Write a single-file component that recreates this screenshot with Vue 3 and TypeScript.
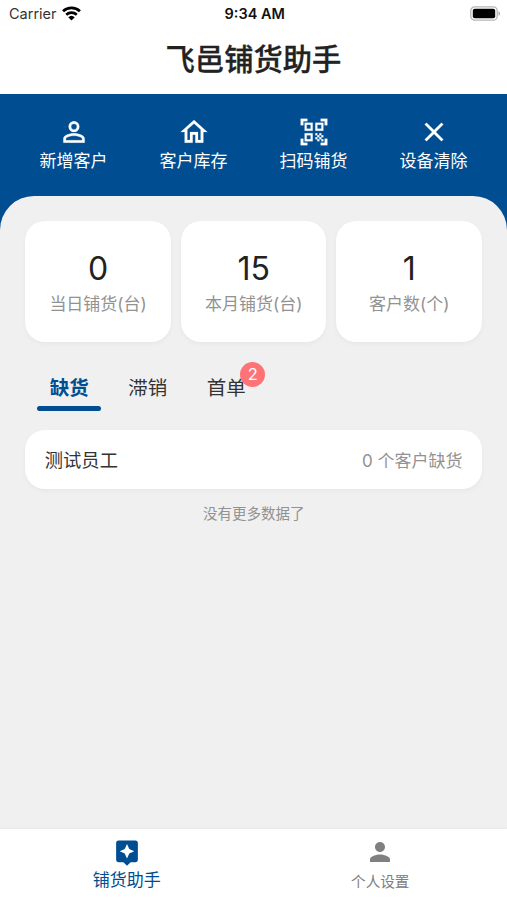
<script setup lang="ts">
import { ref } from 'vue'

interface Action {
  label: string
  path: string
}
interface Stat {
  value: number
  label: string
}
interface Tab {
  label: string
  badge?: number
}
interface NavItem {
  label: string
  path: string
}

const actions: Action[] = [
  {
    label: '新增客户',
    path: 'M12 5.9a2.1 2.1 0 1 1 0 4.2 2.1 2.1 0 0 1 0-4.2m0 9c2.97 0 6.1 1.46 6.1 2.1v1.1H5.9V17c0-.64 3.13-2.1 6.1-2.1M12 4C9.79 4 8 5.79 8 8s1.79 4 4 4 4-1.79 4-4-1.79-4-4-4zm0 9c-2.67 0-8 1.34-8 4v3h16v-3c0-2.66-5.33-4-8-4z',
  },
  {
    label: '客户库存',
    path: 'M12 5.69l5 4.5V18h-2v-6H9v6H7v-7.81l5-4.5M12 3L2 12h3v8h6v-6h2v6h6v-8h3L12 3z',
  },
  {
    label: '扫码铺货',
    path: 'M9.5 6.5v3h-3v-3h3M11 5H5v6h6V5zm-1.5 9.5v3h-3v-3h3M11 13H5v6h6v-6zm6.5-6.5v3h-3v-3h3M19 5h-6v6h6V5zm-6 8h1.5v1.5H13V13zm1.5 1.5H16V16h-1.5v-1.5zM16 13h1.5v1.5H16V13zm-3 3h1.5v1.5H13V16zm1.5 1.5H16V19h-1.5v-1.5zM16 16h1.5v1.5H16V16zm1.5-1.5H19V16h-1.5v-1.5zm0 3H19V19h-1.5v-1.5zM22 7h-2V4h-3V2h5v5zm0 15v-5h-2v3h-3v2h5zM2 22h5v-2H4v-3H2v5zM2 2v5h2V4h3V2H2z',
  },
  {
    label: '设备清除',
    path: 'M19 6.41L17.59 5 12 10.59 6.41 5 5 6.41 10.59 12 5 17.59 6.41 19 12 13.41 17.59 19 19 17.59 13.41 12 19 6.41z',
  },
]

const stats: Stat[] = [
  { value: 0, label: '当日铺货(台)' },
  { value: 15, label: '本月铺货(台)' },
  { value: 1, label: '客户数(个)' },
]

const tabs: Tab[] = [{ label: '缺货' }, { label: '滞销' }, { label: '首单', badge: 2 }]

const navItems: NavItem[] = [
  {
    label: '铺货助手',
    path: 'M19 2H5c-1.11 0-2 .9-2 2v14c0 1.1.89 2 2 2h4l3 3 3-3h4c1.1 0 2-.9 2-2V4c0-1.1-.9-2-2-2zm-5.12 10.88L12 17l-1.88-4.12L6 11l4.12-1.88L12 5l1.88 4.12L18 11l-4.12 1.88z',
  },
  {
    label: '个人设置',
    path: 'M12 12c2.21 0 4-1.79 4-4s-1.79-4-4-4-4 1.79-4 4 1.79 4 4 4zm0 2c-2.67 0-8 1.34-8 4v2h16v-2c0-2.66-5.33-4-8-4z',
  },
]

const activeTab = ref(0)
const activeNav = ref(0)
</script>

<template>
  <div class="screen">
    <header class="status">
      <div class="carrier">
        <span>Carrier</span>
        <svg class="wifi" viewBox="0 0 18 14">
          <path class="arc" d="M1 4.9a11.6 11.6 0 0 1 16 0" />
          <path class="arc" d="M4 8.1a7.4 7.4 0 0 1 10 0" />
          <path d="M9 13.6L5.9 10.6a4.5 4.5 0 0 1 6.2 0z" />
        </svg>
      </div>
      <span class="clock">9:34 AM</span>
      <svg class="battery" viewBox="0 0 31 15">
        <rect class="shell" x=".8" y=".8" width="26.4" height="13.4" rx="4" />
        <rect x="2.8" y="2.8" width="22.4" height="9.4" rx="2" />
        <path class="cap" d="M28.5 5.2c2 .7 2 3.9 0 4.6z" />
      </svg>
    </header>
    <h1 class="title">飞邑铺货助手</h1>

    <nav class="actions">
      <button v-for="action in actions" :key="action.label" class="action">
        <svg viewBox="0 0 24 24"><path :d="action.path" /></svg>
        <span>{{ action.label }}</span>
      </button>
    </nav>

    <main class="sheet">
      <section class="stats">
        <article v-for="stat in stats" :key="stat.label" class="stat">
          <strong>{{ stat.value }}</strong>
          <span>{{ stat.label }}</span>
        </article>
      </section>

      <div class="tabs">
        <button
          v-for="(tab, i) in tabs"
          :key="tab.label"
          class="tab"
          :class="{ active: i === activeTab }"
          @click="activeTab = i"
        >
          {{ tab.label }}
          <span v-if="tab.badge" class="badge">{{ tab.badge }}</span>
        </button>
      </div>

      <div class="row">
        <span class="name">测试员工</span>
        <span class="count">0 个客户缺货</span>
      </div>
      <p class="end">没有更多数据了</p>
    </main>

    <footer class="bottom">
      <button
        v-for="(item, i) in navItems"
        :key="item.label"
        class="nav"
        :class="{ active: i === activeNav }"
        @click="activeNav = i"
      >
        <svg viewBox="0 0 24 24"><path :d="item.path" /></svg>
        <span>{{ item.label }}</span>
      </button>
    </footer>
  </div>
</template>

<style>
body {
  margin: 0;
}
</style>

<style scoped>
.screen {
  display: flex;
  flex-direction: column;
  height: 900px;
  overflow: hidden;
  background: #fff;
  color: #222;
  font-family: Inter, 'Noto Sans CJK SC', sans-serif;
}
button {
  padding: 0;
  border: 0;
  background: none;
  color: inherit;
  font: inherit;
}
.status {
  display: grid;
  grid-template-columns: 1fr auto 1fr;
  align-items: center;
  height: 27px;
  padding: 0 6.5px 0 9px;
  flex: none;
}
.carrier {
  display: flex;
  align-items: center;
  gap: 5px;
  font-size: 14.5px;
  color: #333;
}
.wifi {
  width: 19px;
  height: 15px;
  margin-top: -1px;
  fill: #000;
}
.arc {
  fill: none;
  stroke: #000;
  stroke-width: 2.6;
}
.clock {
  font-size: 14.5px;
  font-weight: 600;
  color: #111;
}
.battery {
  justify-self: end;
  width: 31px;
  height: 15px;
}
.shell {
  fill: #fff;
  stroke: #b5b5b5;
  stroke-width: 1.3;
}
.cap {
  fill: #aaa;
}
.title {
  flex: none;
  height: 67px;
  margin: 0;
  font-size: 29.3px;
  font-weight: 500;
  line-height: 66px;
  text-align: center;
  -webkit-text-stroke: 0.3px currentColor;
}
.actions {
  display: grid;
  grid-template-columns: repeat(4, 1fr);
  flex: none;
  box-sizing: border-box;
  height: 136px;
  padding: 22px 13.5px 0;
  background: #004d91;
  color: #fff;
}
.action {
  display: flex;
  flex-direction: column;
  align-items: center;
  height: 60px;
}
.action svg {
  width: 32px;
  height: 32px;
  fill: currentColor;
  stroke: currentColor;
  stroke-width: 0.15;
}
.action span {
  font-size: 17px;
  line-height: 26px;
}
.sheet {
  flex: 1;
  margin-top: -34px;
  padding: 24.5px 25px 0 25.3px;
  border-radius: 34px 34px 0 0;
  background: #f0f0f0;
}
.stats {
  display: grid;
  grid-template-columns: repeat(3, 1fr);
  gap: 10px;
}
.stat {
  display: flex;
  flex-direction: column;
  align-items: center;
  box-sizing: border-box;
  height: 121.5px;
  padding-top: 28px;
  border-radius: 20px;
  background: #fff;
  box-shadow: 0 2px 5px rgba(0, 0, 0, 0.04);
}
.stat strong {
  font-size: 32px;
  font-weight: 400;
  line-height: 39px;
}
.stat span {
  font-size: 17px;
  line-height: 32px;
  color: #929292;
}
.tabs {
  display: flex;
  gap: 14.5px;
  padding: 20px 12px 0;
}
.tab {
  position: relative;
  width: 64px;
  height: 49px;
  font-size: 19.5px;
  line-height: 52px;
  color: #333;
}
.tab.active {
  color: #004d91;
  font-weight: 700;
}
.tab.active::after {
  content: '';
  position: absolute;
  right: 0;
  bottom: 0;
  left: 0;
  height: 5px;
  border-radius: 3px;
  background: #004d91;
}
.badge {
  position: absolute;
  top: 0;
  right: -7px;
  width: 25px;
  height: 25px;
  border-radius: 50%;
  background: #ff7276;
  color: #fff;
  font-size: 16.5px;
  line-height: 25px;
  text-align: center;
}
.row {
  display: flex;
  align-items: center;
  justify-content: space-between;
  height: 58.5px;
  margin-top: 19px;
  padding: 0 19.5px;
  border-radius: 20px;
  background: #fff;
  box-shadow: 0 2px 5px rgba(0, 0, 0, 0.04);
}
.name {
  font-size: 18.3px;
  color: #333;
}
.count {
  font-size: 17px;
  color: #929292;
}
.end {
  margin: 13px 0 0;
  font-size: 14.5px;
  line-height: 24px;
  text-align: center;
  color: #929292;
}
.bottom {
  display: grid;
  grid-template-columns: 1fr 1fr;
  flex: none;
  height: 71px;
  background: #fff;
  box-shadow: 0 -1px 2px rgba(0, 0, 0, 0.04);
  z-index: 1;
}
.nav {
  display: flex;
  flex-direction: column;
  align-items: center;
  justify-content: flex-start;
  padding-top: 8px;
  color: #808080;
  font-size: 14.6px;
}
.nav svg {
  width: 30px;
  height: 30px;
  fill: currentColor;
}
.nav span {
  padding-top: 1px;
  line-height: 28px;
}
.nav.active {
  padding-top: 9px;
  color: #004d91;
  font-size: 17px;
}
.nav.active svg {
  height: 29px;
}
.nav.active span {
  padding-top: 0;
  line-height: 27px;
}
</style>
